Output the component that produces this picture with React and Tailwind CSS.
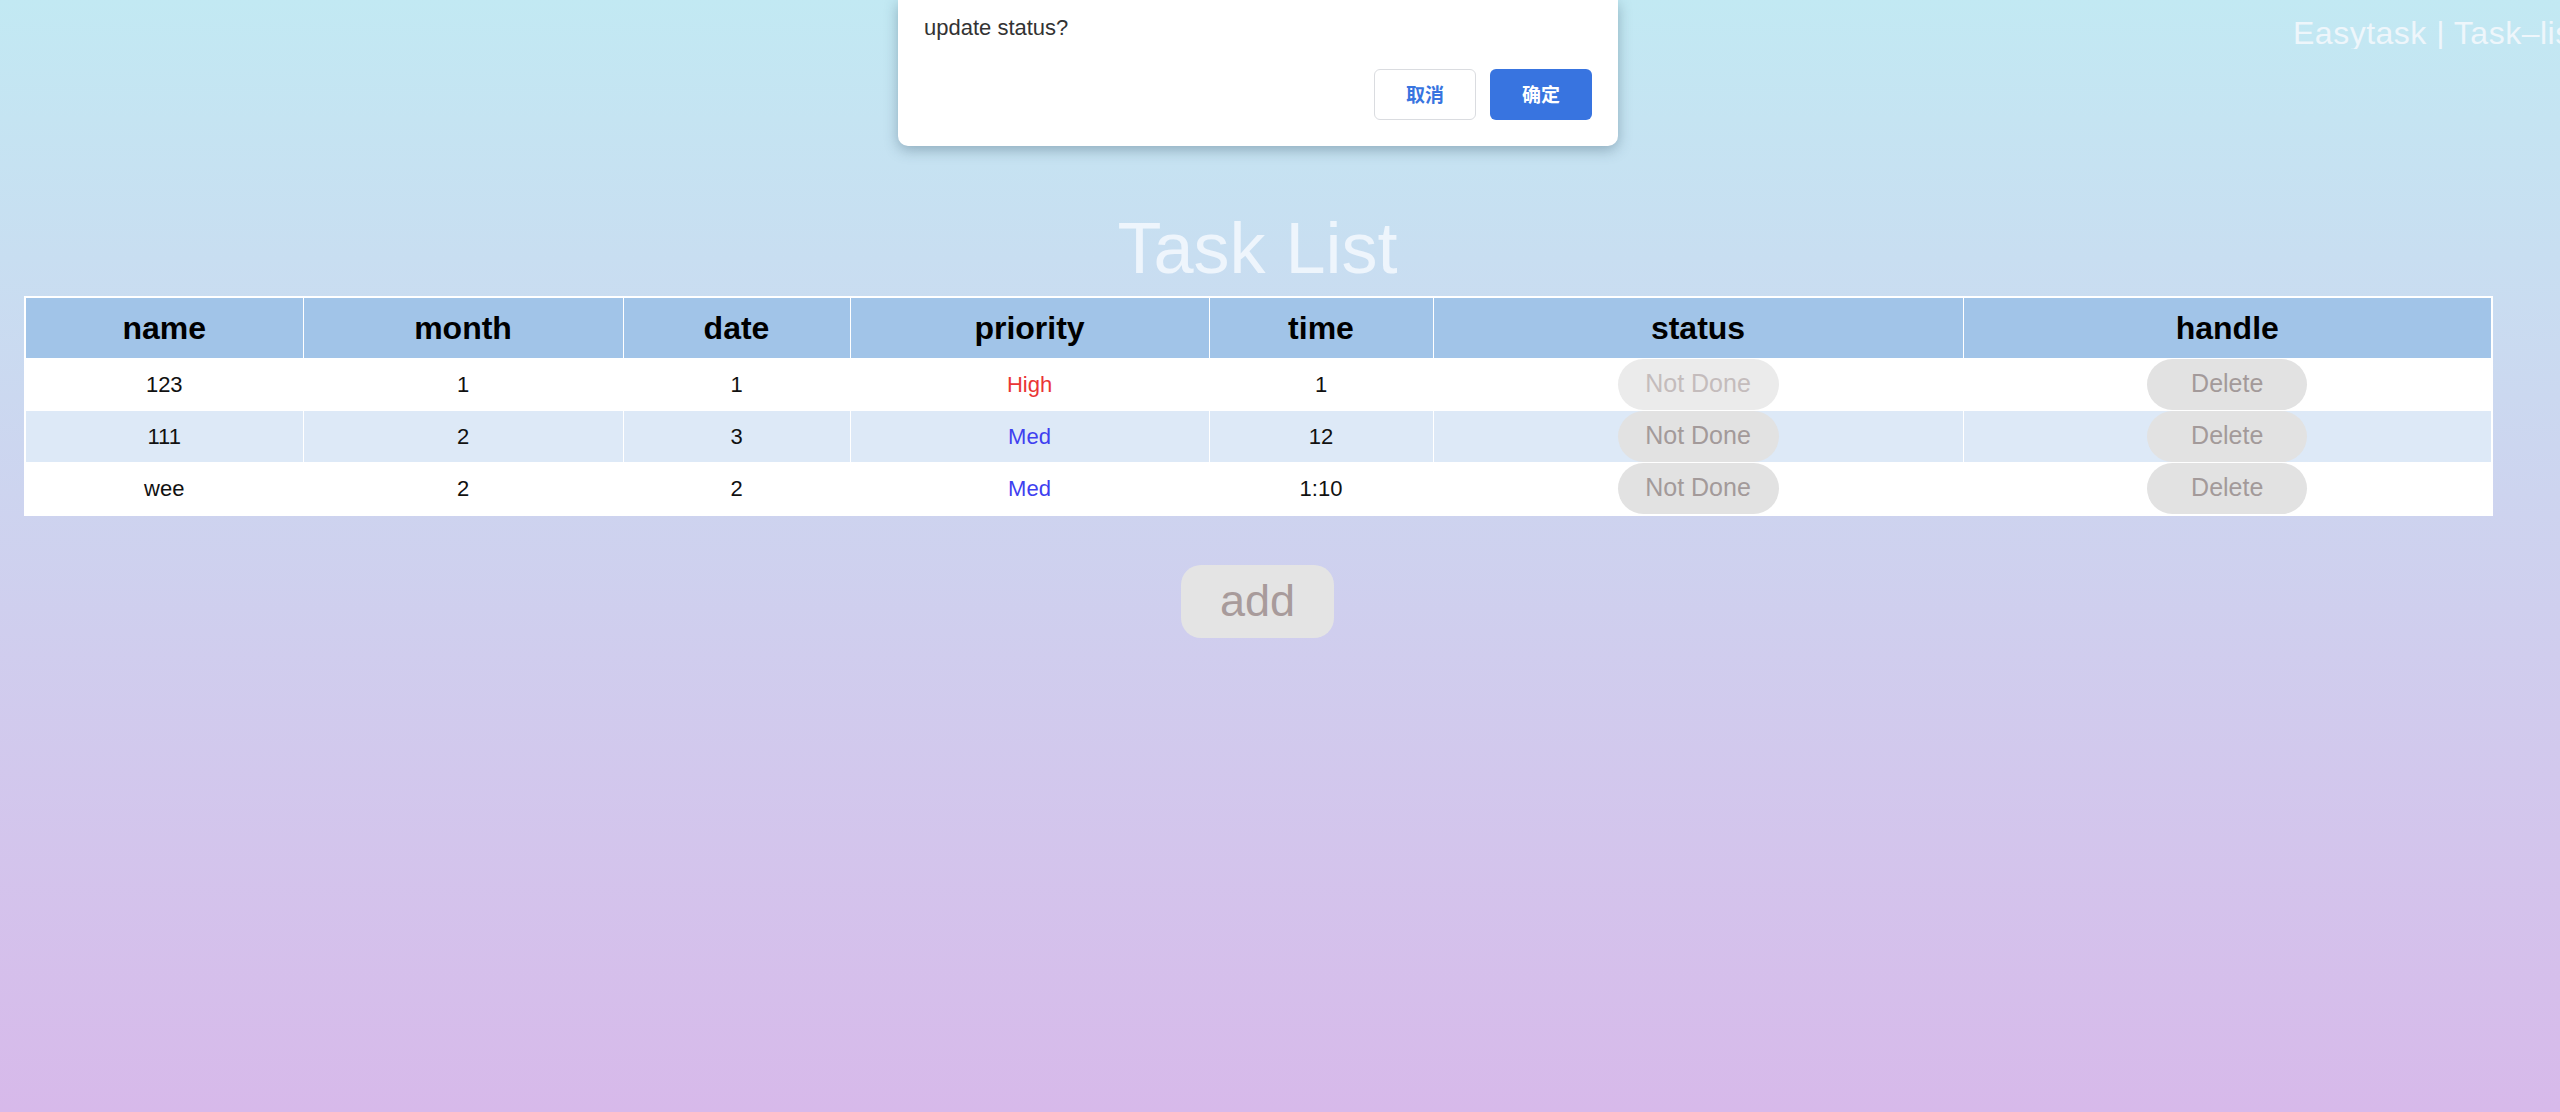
import React from "react";

const tasks = [
  { name: "123", month: "1", date: "1", priority: "High", time: "1", light: true },
  { name: "111", month: "2", date: "3", priority: "Med", time: "12" },
  { name: "wee", month: "2", date: "2", priority: "Med", time: "1:10" },
];

const cols = ["name", "month", "date", "priority", "time", "status", "handle"];
const widths = [278, 320, 227, 359, 224, 530, 529];

function ConfirmDialog() {
  return (
    <div className="absolute left-[898px] top-0 w-[720px] h-[146px] bg-white rounded-b-[10px] shadow-[0_4px_14px_rgba(40,70,90,0.35)] px-[26px] pt-[17px]">
      <p className="text-[22px] leading-[22px] text-[#333333]">update status?</p>
      <div className="flex justify-end gap-[14px] mt-[30px]">
        <button className="w-[102px] h-[51px] rounded-[6px] border-[1.5px] border-[#dadce0] bg-white text-[19px] font-bold text-[#3874e0] font-['Noto_Sans_CJK_SC',sans-serif]">
          取消
        </button>
        <button className="w-[102px] h-[51px] rounded-[6px] bg-[#3874e0] text-[19px] font-bold text-white font-['Noto_Sans_CJK_SC',sans-serif]">
          确定
        </button>
      </div>
    </div>
  );
}

export default function App() {
  return (
    <div className="relative h-[1112px] w-full overflow-hidden bg-gradient-to-b from-[#c2e9f3] to-[#d7b9ea] font-['Liberation_Sans',Arial,sans-serif]">
      {/* top-right brand, runs past the window edge */}
      <div className="flex justify-end pt-[17px]">
        <div className="w-[267px] overflow-hidden whitespace-nowrap text-[32px] leading-[32px] tracking-[0.5px] text-[#eef6fb]">
          Easytask | Task–list
        </div>
      </div>

      <div className="ml-[24px] w-[2467px]">
        <h1 className="mt-[163px] mb-[12px] text-center text-[72px] leading-[72px] text-[#eef5fc]">
          Task List
        </h1>

        <table className="w-[2467px] table-fixed border-collapse border-2 border-white text-center">
          <colgroup>
            {widths.map((w, i) => (
              <col key={i} style={{ width: w }} />
            ))}
          </colgroup>
          <thead>
            <tr className="bg-[#a1c4e8]">
              {cols.map((c) => (
                <th key={c} className="h-[61px] p-0 border border-white text-[32px] font-bold text-black">
                  {c}
                </th>
              ))}
            </tr>
          </thead>
          <tbody className="text-[22px] text-[#111111]">
            {tasks.map((t, i) => (
              <tr key={i} className={i % 2 === 1 ? "bg-[#dde9f7]" : "bg-white"}>
                <td className="h-[51px] p-0 border border-white">{t.name}</td>
                <td className="p-0 border border-white">{t.month}</td>
                <td className="p-0 border border-white">{t.date}</td>
                <td
                  className={
                    "p-0 border border-white " +
                    (t.priority === "High" ? "text-[#ea3535]" : "text-[#3f3ff0]")
                  }
                >
                  {t.priority}
                </td>
                <td className="p-0 border border-white">{t.time}</td>
                <td className="p-0 border border-white">
                  <button
                    className={
                      "w-[161px] h-[51px] rounded-full text-[25px] align-middle " +
                      (t.light ? "bg-[#ebebeb] text-[#c4bcbc]" : "bg-[#e2e2e2] text-[#a39a9a]")
                    }
                  >
                    Not Done
                  </button>
                </td>
                <td className="p-0 border border-white">
                  <button className="w-[160px] h-[51px] rounded-full bg-[#e2e2e2] text-[25px] text-[#a39a9a] align-middle">
                    Delete
                  </button>
                </td>
              </tr>
            ))}
          </tbody>
        </table>

        <div className="flex justify-center mt-[49px]">
          <button className="w-[153px] h-[73px] rounded-[20px] bg-[#e4e4e4] text-[45px] text-[#a89b9b]">
            add
          </button>
        </div>
      </div>

      <ConfirmDialog />
    </div>
  );
}
